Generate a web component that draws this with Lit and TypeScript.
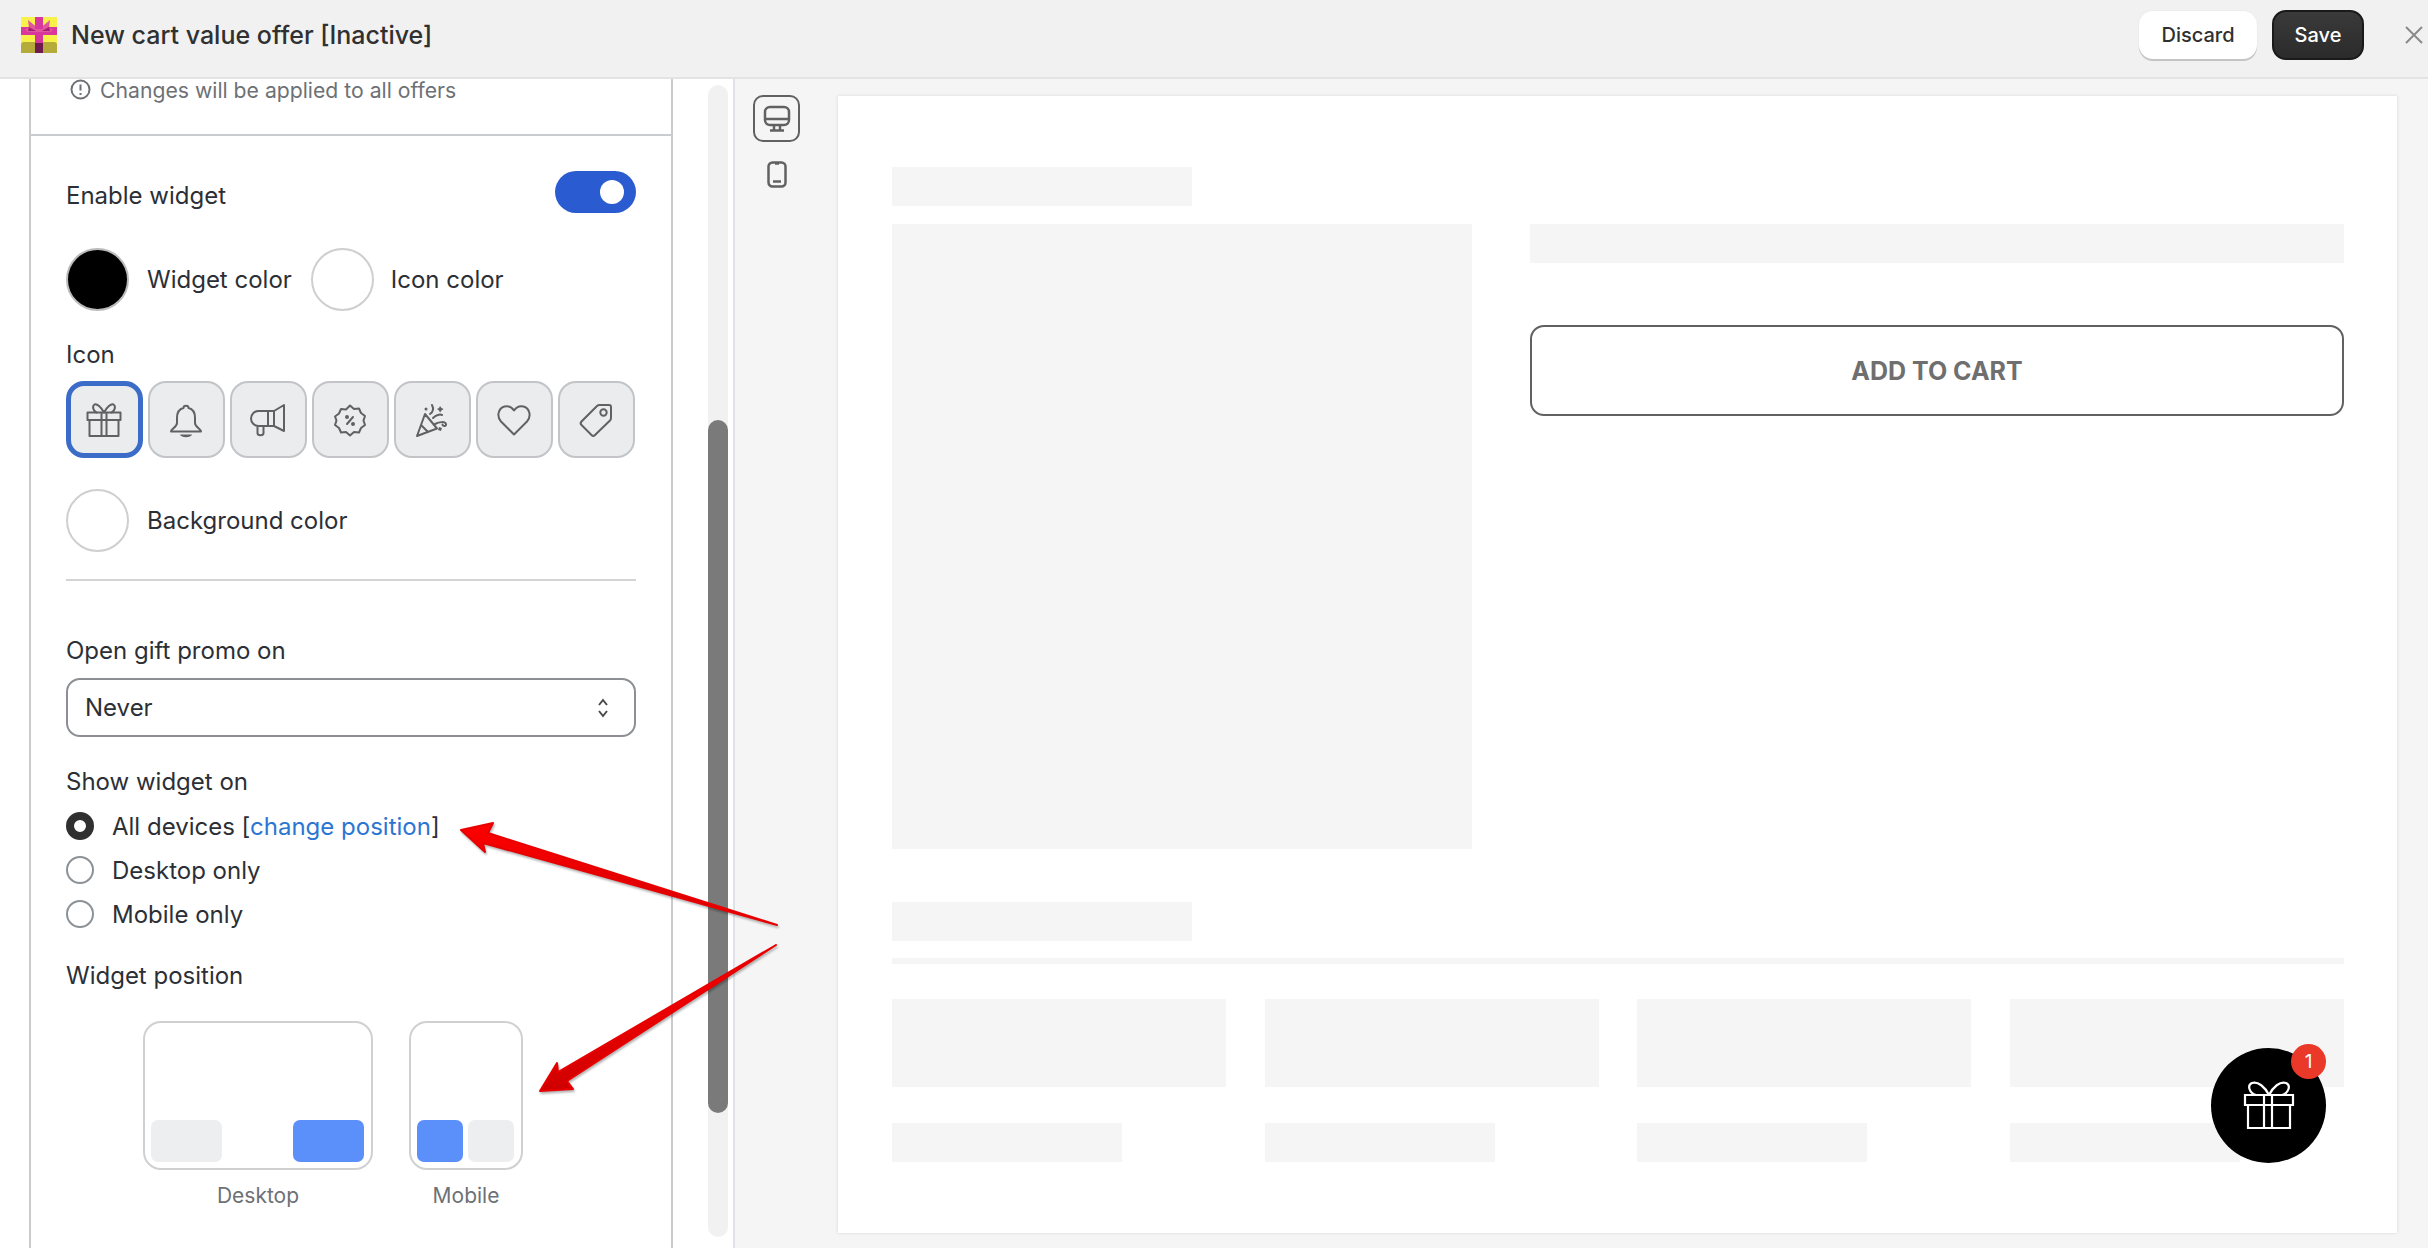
import { LitElement, html, css, svg } from "lit";
import { customElement } from "lit/decorators.js";

const icons = [
  svg`<path d="M.5 9.500h33v7.500H.5zM2.500 17v16h29V17M14.500 9.500V33M19.500 9.500V33"/><path d="M17 9.500C14 4 10 .5 7.500 1.500 5 3 6 8 9.500 9.500M17 9.500c3-5.500 7-9 9.500-8 2.500 1.500 1.500 6.500-2 8"/>`,
  svg`<path d="M14.500 5c-4.500 1-6.500 5-6.500 10v5c0 4-6 6-6 8.500h30c0-2.500-6-4.500-6-8.500v-5c0-5-2-9-6.500-10 0-3-5-3-5 0z"/><path d="M11 31.500h12c-1 3.500-11 3.500-12 0z" fill="#616161" stroke="none"/>`,
  svg`<path d="M23 8H7.500a7.500 7.500 0 0 0 0 15H23zM17 8v15M23 8L33 2v26l-10-5M6.500 23v7c0 3 6 3 6 0v-7"/>`,
  svg`<path d="M17 2.500l4 3.500 5-.500 2 4.500 4 3-1.500 4.500 1.500 4.500-4 3-2 4.500-5-.500-4 3.500-4-3.500-5 .500-2-4.500-4-3 1.500-4.500L2 13.500l4-3 2-4.500 5 .500z"/><path d="M20 14l-6 7"/><circle cx="14" cy="14" r="1" fill="#616161"/><circle cx="20" cy="21" r="1" fill="#616161"/>`,
  svg`<path d="M10 11L2 33l20-7.500zM6 22l7 7M15 11c3-2 4-5 2-9M18 15c3-3 7-4 9-3M20 21c4-2 10-3 11 0 .500 2-3 3-3.500 .500"/><path d="M25 3l1.500 2 2 1-2 1.500L25 9.500 24 7.500 22 6l2-1zM24 24l3 1-1 3-3-1z" fill="#616161" stroke="none"/><circle cx="11" cy="6" r="1.500" fill="#616161" stroke="none"/>`,
  svg`<path d="M17 31.500L4 18.500C-.5 13.500 1 5.500 7.500 3.500c4-1 7.500 1 9.500 4 2-3 5.500-5 9.500-4 6.500 2 8 10 3.500 15z"/>`,
  svg`<path d="M21 2h9a2 2 0 0 1 2 2v11a4 4 0 0 1-1 2.500L16 32a2.500 2.500 0 0 1-3.500 0L2.500 22a2.500 2.500 0 0 1 0-3.500L18 3a4 4 0 0 1 3-1z"/><circle cx="24.500" cy="9.500" r="3.200"/>`,
];

@customElement("app-root")
export class AppRoot extends LitElement {
  static styles = css`
    :host { display: block; position: relative; width: 2428px; height: 1248px; overflow: hidden; background: #f5f5f5; font-family: Inter, "Liberation Sans", sans-serif; color: #303030; }
    * { box-sizing: border-box; }
    .header { height: 79px; background: #f1f1f1; border-bottom: 2px solid #e3e3e3; display: flex; align-items: center; padding: 0 5px 0 21px; }
    .logo { width: 36px; height: 36px; margin-right: 14px; margin-top: -8px; display: block; }
    .title { font-size: 25px; font-weight: 500; flex: 1; margin-top: -8px; }
    .btn { height: 48px; border-radius: 14px; font: 500 20px Inter, sans-serif; display: flex; align-items: center; justify-content: center; margin-top: -8px; }
    .discard { width: 118px; background: #fff; box-shadow: 0 2px 0 #c4c4c4, 0 0 0 1px #ececec; color: #303030; margin-right: 15px; }
    .save { width: 92px; height: 50px; background: linear-gradient(#3a3a3a, #2b2b2b); color: #fff; border: 2px solid #1a1a1a; margin-right: 41px; }
    .close { width: 18px; height: 18px; display: block; margin-top: -8px; }
    .main { display: flex; height: 1169px; }
    .pane { width: 735px; background: #fff; border-right: 2px solid #dfe3e8; padding-left: 29px; display: flex; flex: none; }
    .card { width: 644px; height: 100%; border: solid #c9cccf; border-width: 0 2px; flex: none; }
    .note { height: 57px; border-bottom: 2px solid #c9cccf; display: flex; gap: 9px; padding: 0 0 0 39px; font-size: 21.200px; color: #6d7175; align-items: flex-start; line-height: 22px; }
    .note svg { width: 21px; height: 21px; flex: none; }
    .form { padding: 35px 35px 0; font-size: 24px; color: #2c2f36; }
    .row-between { display: flex; justify-content: space-between; height: 42px; }
    .row-between span { margin-top: 8px; line-height: 34px; }
    .toggle { width: 81px; height: 42px; border-radius: 21px; background: #2a5bd0; position: relative; }
    .toggle i { position: absolute; right: 12px; top: 9px; width: 24px; height: 24px; border-radius: 50%; background: #fff; }
    .colors { display: flex; align-items: center; margin-top: 35px; height: 63px; }
    .colors.bg { margin-top: 30px; height: 64px; }
    .swatch { width: 63px; height: 63px; border-radius: 50%; border: 2px solid #cfcfcf; background: #fff; flex: none; margin-right: 18px; }
    .swatch.black { background: #000; border-color: #bbb; }
    .swatch.second { margin-left: 19px; margin-right: 17px; }
    .lab { line-height: 34px; height: 34px; }
    .m-icon { margin-top: 27px; }
    .icon-row { display: flex; gap: 5px; margin-top: 9px; }
    .ib { width: 77px; height: 77px; border-radius: 18px; background: #ebecee; border: 2px solid #c2c4c7; display: flex; align-items: center; justify-content: center; padding-right: 2px; }
    .ib.sel { border: 5px solid #3a6cc8; }
    .ib svg { width: 34px; height: 34px; fill: none; stroke: #616161; stroke-width: 2; stroke-linejoin: round; stroke-linecap: round; overflow: visible; }
    .hr { height: 2px; background: #d3d4d6; margin-top: 27px; }
    .m-open { margin-top: 53px; }
    .select { margin-top: 10px; height: 59px; border: 2px solid #8c8f94; border-radius: 14px; display: flex; align-items: center; justify-content: space-between; padding: 0 24px 0 17px; }
    .select svg { width: 14px; height: 24px; fill: none; stroke: #4a4a4a; stroke-width: 2; }
    .m-show { margin-top: 28px; }
    .radios { margin-top: 5px; }
    .radio { height: 44px; display: flex; align-items: center; gap: 18px; }
    .radio i { width: 28px; height: 28px; border-radius: 50%; border: 2px solid #8c9196; background: #fff; flex: none; }
    .radio i.on { border: 8px solid #303030; }
    .link { color: #2c76d2; }
    .m-pos { margin-top: 23px; }
    .pos { display: flex; gap: 36px; margin-top: 28px; padding-left: 77px; }
    .pos-item { display: flex; flex-direction: column; align-items: center; gap: 14px; font-size: 21px; color: #6d7175; line-height: 24px; }
    .box { height: 149px; border: 2px solid #cfd0d2; border-radius: 18px; display: flex; gap: 5px; align-items: flex-end; padding: 0 7px 6px 6px; background: #fff; }
    .box.d { width: 230px; justify-content: space-between; }
    .box.m { width: 114px; }
    .slot { height: 42px; border-radius: 7px; background: #edeef0; }
    .box.d .slot { width: 71px; } .box.m .slot { width: 46px; }
    .slot.on { background: #5b8ff9; }
    .track { width: 20px; height: 1152px; margin: 6px 0 0 35px; border-radius: 10px; background: #f1f1f1; flex: none; }
    .thumb { width: 20px; height: 693px; margin-top: 335px; border-radius: 10px; background: #7a7a7a; }
    .side { width: 103px; padding: 16px 0 0 18px; flex: none; display: flex; flex-direction: column; }
    .dev { width: 47px; height: 47px; border: 2px solid #616161; border-radius: 10px; display: flex; align-items: center; justify-content: center; }
    .dev svg { width: 28px; height: 28px; fill: none; stroke: #616161; stroke-width: 2.500; }
    .phone { width: 47px; margin-top: 19px; display: flex; justify-content: center; }
    .phone svg { width: 20px; height: 27px; fill: none; stroke: #616161; stroke-width: 2.500; }
    .preview { width: 1559px; height: 1137px; margin-top: 17px; background: #fff; box-shadow: 0 0 3px #d5d5d5; position: relative; padding: 71px 53px 0 54px; flex: none; }
    .sk { background: #f5f5f5; }
    .sk-title { width: 300px; height: 39px; }
    .top { display: flex; gap: 58px; margin-top: 18px; }
    .sk-img { width: 580px; height: 625px; }
    .top-r { flex: 1; }
    .sk-bar { height: 39px; }
    .atc { margin-top: 62px; height: 91px; border: 2px solid #616161; border-radius: 14px; display: flex; align-items: center; justify-content: center; font-size: 25px; font-weight: 700; color: #6f6f6f; }
    .t2 { margin-top: 53px; }
    .line { height: 6px; margin-top: 17px; }
    .cols { display: grid; grid-template-columns: repeat(4, 334px); column-gap: 38.500px; margin-top: 35px; row-gap: 36px; }
    .tile { height: 88px; }
    .small { width: 230px; height: 39px; }
    .widget { position: absolute; right: 71px; bottom: 70px; width: 115px; height: 115px; border-radius: 50%; background: #000; display: flex; align-items: center; justify-content: center; }
    .widget svg { width: 50px; height: 50px; fill: none; stroke: #fff; stroke-width: 2.200; overflow: visible; }
    .badge { position: absolute; right: 0; top: -4px; width: 35px; height: 35px; border-radius: 50%; background: #ea3829; color: #fff; font-size: 19px; display: flex; align-items: center; justify-content: center; }
    .arrows { position: absolute; inset: 0; width: 2428px; height: 1248px; pointer-events: none; }
    .arrows polygon { stroke-linejoin: round; stroke-width: 2; filter: drop-shadow(1px 2px 1px rgba(0,0,0,.3)); }
  `;

  render() {
    return html`
      <div class="header">
        <svg class="logo" viewBox="0 0 36 36">
          <rect width="36" height="36" fill="#f8f14a"/>
          <path d="M0 36V28q0-3 3-3h30q3 0 3 3v8z" fill="#b5ab3a"/>
          <path d="M0 10h36v8H0z" fill="#d8379c"/>
          <path d="M14 0h8v36h-8z" fill="#d8379c"/>
          <path d="M18 12L7 3l1 8-4 1 2 3h24l2-3-4-1 1-8z" fill="#e2559f"/>
          <path d="M8 10l7 4-8 0zM28 10l-7 4 8 0z" fill="#a61f72"/>
          <path d="M14 0h8v12h-8z" fill="#d8379c"/>
          <rect x="14" y="26" width="8" height="10" fill="#6d1a4f"/>
        </svg>
        <div class="title">New cart value offer [Inactive]</div>
        <div class="btn discard">Discard</div>
        <div class="btn save">Save</div>
        <svg class="close" viewBox="0 0 18 18" fill="none" stroke="#8a8a8a" stroke-width="2"><path d="M1 1l16 16M17 1L1 17"/></svg>
      </div>
      <div class="main">
        <div class="pane">
          <div class="card">
            <div class="note">
              <svg viewBox="0 0 21 21" fill="none" stroke="#6d7175" stroke-width="2"><circle cx="10.500" cy="10.500" r="9"/><path d="M10.500 5.500v6M10.500 14v2"/></svg>
              <span>Changes will be applied to all offers</span>
            </div>
            <div class="form">
              <div class="row-between"><span>Enable widget</span><div class="toggle"><i></i></div></div>
              <div class="colors">
                <div class="swatch black"></div><span>Widget color</span>
                <div class="swatch second"></div><span>Icon color</span>
              </div>
              <div class="lab m-icon">Icon</div>
              <div class="icon-row">
                ${icons.map((p, i) => html`<div class="ib ${i === 0 ? "sel" : ""}"><svg viewBox="0 0 34 34">${p}</svg></div>`)}
              </div>
              <div class="colors bg"><div class="swatch"></div><span>Background color</span></div>
              <div class="hr"></div>
              <div class="lab m-open">Open gift promo on</div>
              <div class="select"><span>Never</span>
                <svg viewBox="0 0 14 24"><path d="M3 9l4-5 4 5M3 15l4 5 4-5"/></svg>
              </div>
              <div class="lab m-show">Show widget on</div>
              <div class="radios">
                <div class="radio"><i class="on"></i><span>All devices [<span class="link">change position</span>]</span></div>
                <div class="radio"><i></i><span>Desktop only</span></div>
                <div class="radio"><i></i><span>Mobile only</span></div>
              </div>
              <div class="lab m-pos">Widget position</div>
              <div class="pos">
                <div class="pos-item"><div class="box d"><div class="slot"></div><div class="slot on"></div></div>Desktop</div>
                <div class="pos-item"><div class="box m"><div class="slot on"></div><div class="slot"></div></div>Mobile</div>
              </div>
            </div>
          </div>
          <div class="track"><div class="thumb"></div></div>
        </div>
        <div class="side">
          <div class="dev"><svg viewBox="0 0 28 28"><rect x="2" y="2" width="24" height="18" rx="5"/><path d="M2 14h24M11 20v5M17 20v5M7 25.500h14"/></svg></div>
          <div class="phone"><svg viewBox="0 0 20 27"><rect x="1.500" y="1.500" width="17" height="24" rx="4"/><path d="M6 20.500h8M8 2.500h4"/></svg></div>
        </div>
        <div class="preview">
          <div class="sk sk-title"></div>
          <div class="top">
            <div class="sk sk-img"></div>
            <div class="top-r">
              <div class="sk sk-bar"></div>
              <div class="atc">ADD TO CART</div>
            </div>
          </div>
          <div class="sk sk-title t2"></div>
          <div class="sk line"></div>
          <div class="cols">
            ${[0, 1, 2, 3].map(() => html`<div class="sk tile"></div>`)}
            ${[0, 1, 2, 3].map(() => html`<div class="sk small"></div>`)}
          </div>
          <div class="widget">
            <svg viewBox="0 0 50 50"><path d="M1 14h48v10H1zM4 24v23h42V24M20 14v33M28 14v33"/><path d="M25 14C21 6 14 0 8 2 3 4 5 12 12 14M25 14c4-8 11-14 17-12 5 2 3 10-4 12"/></svg>
            <div class="badge">1</div>
          </div>
        </div>
      </div>
      <svg class="arrows" viewBox="0 0 2428 1248">
        <defs><linearGradient id="r" x1="0" y1="0" x2="0" y2="1"><stop offset="0" stop-color="#f00"/><stop offset="1" stop-color="#d00000"/></linearGradient></defs>
        <polygon points="461,830 493,823 488,833 777,925 483,843 485,852" fill="url(#r)" stroke="#e80000"/>
        <polygon points="540,1091 557,1063 558,1072 776,945 567,1081 573,1089" fill="url(#r)" stroke="#e80000"/>
      </svg>
    `;
  }
}
